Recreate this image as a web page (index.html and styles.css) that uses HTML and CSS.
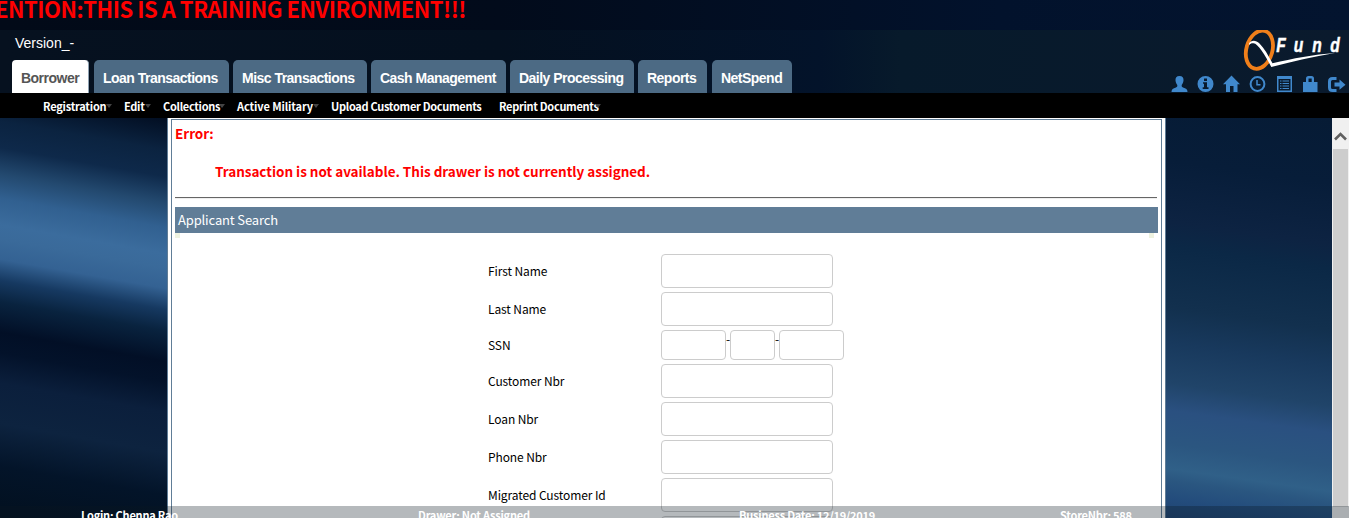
FILE: index.html
```html
<!DOCTYPE html>
<html lang="en">
<head>
<meta charset="utf-8">
<title>QFund</title>
<link rel="stylesheet" href="styles.css">
</head>
<body>
<div class="app">
  <div class="notice"><span class="notice-text">ATTENTION:THIS IS A TRAINING ENVIRONMENT!!!</span></div>
  <header class="header">
    <div class="header-left">
      <div class="version">Version_-</div>
      <nav class="tabs">
        <a class="tab active w-borrower">Borrower</a>
        <a class="tab w-loan">Loan Transactions</a>
        <a class="tab w-misc">Misc Transactions</a>
        <a class="tab w-cash">Cash Management</a>
        <a class="tab w-daily">Daily Processing</a>
        <a class="tab w-reports">Reports</a>
        <a class="tab w-net">NetSpend</a>
      </nav>
    </div>
    <div class="header-right">
      <svg class="logo" width="106" height="42" viewBox="0 0 106 42">
        <ellipse cx="16.400" cy="19.700" rx="13" ry="19.500" fill="none" stroke="#f07f1a" stroke-width="3.800" transform="rotate(16 16.400 19.700)"/>
        <path d="M6 13.500C8 10 12.500 9.500 16.500 13.500C21.500 18.500 25.500 26 29.500 33.300C50 28.500 70 24.500 92 23C70 26.500 50 31.500 28.300 37C22 25 15 13.500 10.500 13.200C8.500 13 7.500 13.500 6 15Z" fill="#fff"/>
        <g class="logo-text" transform="scale(.74 1)"><text x="45" y="21.700">F</text><text x="68.500" y="21.700">u</text><text x="93.500" y="21.700">n</text><text x="118" y="21.700">d</text></g>
      </svg>
      <div class="icons">
        <svg viewBox="0 0 17 17"><path d="M8.500 1C11.500 1 12.800 2.800 12.500 5.500C12.300 8 11.300 9 10.700 10C10.600 11.500 10.900 12 12 12.500C15 13.500 16.500 14.200 16.500 17H.500C.500 14.200 2 13.500 5 12.500C6.100 12 6.400 11.500 6.300 10C5.700 9 4.700 8 4.500 5.500C4.200 2.800 5.500 1 8.500 1Z"/></svg>
        <svg viewBox="0 0 17 17"><path fill-rule="evenodd" d="M8.500 1a8 8 0 1 0 0 16a8 8 0 0 0 0-16ZM7 3.500h3v2.500H7ZM6 7.200h4v5h1.500v1.700H5.700v-1.700H7V8.800H6Z"/></svg>
        <svg viewBox="0 0 17 17"><path d="M8.500.500L17 9.200H14.500V17H10.500V11H7V17H3V9.200H0Z"/></svg>
        <svg viewBox="0 0 17 17"><circle cx="8.500" cy="9" r="6.900" class="line"/><path class="line thin" d="M8 5v4.800h3.500"/></svg>
        <svg viewBox="0 0 17 17"><path fill-rule="evenodd" d="M1 1H16V17H1ZM2.500 4V15.500H14.500V4Z"/><path d="M4 5.500h1.500v1H4zM6.500 5.500H13v1H6.500zM4 8h1.500v1H4zM6.500 8H13v1H6.500zM4 10.500h1.500v1H4zM6.500 10.500H13v1H6.500zM4 13h1.500v1H4zM6.500 13H13v1H6.500z"/></svg>
        <svg viewBox="0 0 17 17"><path fill-rule="evenodd" d="M1 7H4V3.500Q4 1 6.500 1H9.500Q12 1 12 3.500V7H15.500V17H1ZM6.500 7H9.700V3.500H6.500Z"/></svg>
        <svg viewBox="0 0 17 17"><path class="line wide" d="M8.500 3.500H4.500Q1.500 3.500 1.500 6.500V12.500Q1.500 15.500 4.500 15.500H8.500"/><path d="M6.500 7.500H11.500V4.500L17.500 9.700L11.500 14.800V11.500H6.500Z"/></svg>
      </div>
    </div>
  </header>
  <nav class="menu">
    <a class="m-reg drop">Registration</a>
    <a class="m-edit drop">Edit</a>
    <a class="m-coll drop">Collections</a>
    <a class="m-act drop">Active Military</a>
    <a class="m-up">Upload Customer Documents</a>
    <a class="m-rep drop">Reprint Documents</a>
  </nav>
  <div class="body">
    <div class="side-left"></div>
    <main class="panel">
      <div class="panel-inner">
        <div class="error-title">Error:</div>
        <div class="error-text">Transaction is not available. This drawer is not currently assigned.</div>
        <div class="rule"></div>
        <div class="section-title">Applicant Search</div>
        <div class="corners"><i></i><i></i></div>
        <form class="form">
          <label>First Name</label><input type="text">
          <label>Last Name</label><input type="text">
          <label class="short">SSN</label><div class="ssn"><input type="text" class="s3"><span>-</span><input type="text" class="s2"><span>-</span><input type="text" class="s3"></div>
          <label>Customer Nbr</label><input type="text">
          <label>Loan Nbr</label><input type="text">
          <label>Phone Nbr</label><input type="text">
          <label>Migrated Customer Id</label><input type="text">
          <label></label><input type="text">
        </form>
      </div>
    </main>
    <div class="side-right"></div>
    <div class="scrollbar">
      <svg width="17" height="31" viewBox="0 0 17 31"><path d="M3 21.500L8.500 16L14 21.500" fill="none" stroke="#606060" stroke-width="2.600"/></svg>
      <div class="thumb"></div>
    </div>
  </div>
  <footer class="status">
    <span class="f-login">Login: Chenna Rao</span>
    <span class="f-drawer">Drawer: Not Assigned</span>
    <span class="f-date">Business Date: 12/19/2019</span>
    <span class="f-store">StoreNbr: 588</span>
  </footer>
</div>
</body>
</html>
```
FILE: styles.css
```css
* { box-sizing: border-box; }
html, body { margin: 0; height: 100%; overflow: hidden; }
body { font-family: "Noto Sans CJK SC", "Noto Sans", sans-serif; }
.app { width: 1349px; height: 518px; display: flex; flex-direction: column; overflow: hidden; position: relative; background: #020f22; }
.notice { height: 30px; flex: none; background: linear-gradient(90deg, #020a18 0, #020b1b 500px, #02122c 1000px, #03142f 100%); }
.notice-text { display: flex; justify-content: flex-end; width: 466px; color: #f00; font-size: 22px; letter-spacing: -.48px; line-height: 17px; font-weight: 700; white-space: nowrap; }
.header { height: 63px; flex: none; display: flex; justify-content: space-between; background: linear-gradient(90deg, #06111f 0, #04101f 500px, #03132a 820px, #071a2b 900px, #0a1a2d 100%); }
.header-left { font-family: "Liberation Sans", Arial, sans-serif; padding-left: 12px; }
.version { height: 30px; padding: 5px 0 0 3px; color: #fff; font-size: 14px; line-height: 16px; }
.tabs { display: flex; height: 33px; }
.tab { height: 33px; background: #4c6a84; color: #fff; border-radius: 5px 5px 0 0; font-size: 14px; letter-spacing: -.52px; font-weight: 700; line-height: 36px; padding-left: 9px; margin-right: 4px; white-space: nowrap; }
.tab.active { background: #fff; color: #555; border-right: 1px solid #8fa2b3; border-radius: 4px 4px 0 0; }
.w-borrower { width: 77px; margin-right: 5px; }
.w-loan { width: 135px; }
.w-misc { width: 134px; }
.w-cash { width: 135px; }
.w-daily { width: 124px; }
.w-reports { width: 69px; margin-right: 5px; }
.w-net { width: 80px; }
.header-right { width: 178px; display: flex; flex-direction: column; align-items: flex-end; }
.logo { display: block; flex: none; }
.logo-text { font: italic 700 21px "Liberation Sans", Arial, sans-serif; fill: #fff; stroke: #fff; stroke-width: .5; }
.icons { display: flex; width: 174px; justify-content: space-between; padding-top: 3px; margin-right: 4px; }
.icons svg { width: 17px; height: 17px; fill: #4088cc; display: block; overflow: visible; }
.icons .line { fill: none; stroke: #4088cc; stroke-width: 2; }
.icons .thin { stroke-width: 1.500; }
.icons .wide { stroke-width: 3; }
.menu { height: 25px; flex: none; background: #000; display: flex; padding-left: 43px; color: #fff; font-size: 11px; letter-spacing: -.3px; font-weight: 700; line-height: 26px; white-space: nowrap; }
.menu a { position: relative; }
.drop::after { content: ""; position: absolute; top: 11px; right: 12px; border: 3px solid transparent; border-top: 4px solid #444; border-bottom: 0; }
.m-reg { width: 81px; letter-spacing: -.22px; }
.m-edit { width: 39px; }
.m-coll { width: 74px; }
.m-act { width: 94px; letter-spacing: -.1px; }
.m-up { width: 168px; }
.m-rep { width: 114px; }
.body { flex: 1; display: flex; min-height: 0; }
.side-left { width: 167px; background: linear-gradient(190deg, #020e22 0, #0b2340 32px, #0e294a 58px, #23496f 84px, #316090 108px, #3b6c9d 134px, #3a6a9a 148px, #346293 168px, #163961 189px, #09233f 210px, #020f26 240px, #03122a 260px, #0b1f3c 290px, #0d233f 330px, #031429 372px, #02101f 100%); }
.panel { width: 999px; background: #fff; border: solid #607d97; border-width: 0 1px; padding: 1px 3px 0; }
.panel-inner { height: 500px; border: 1px solid #607d97; padding: 0 3px; }
.error-title { color: #f00; font-size: 13.500px; letter-spacing: -.03px; font-weight: 700; height: 30px; line-height: 27px; }
.error-text { color: #f00; font-size: 13.500px; letter-spacing: -.03px; font-weight: 700; height: 47px; line-height: 43px; padding-left: 40px; white-space: nowrap; }
.rule { height: 2px; margin-right: 1px; border-top: 1px solid #666; border-bottom: 1px solid #eee; }
.section-title { height: 26px; margin-top: 8px; background: #607d97; color: #fff; font-size: 13px; letter-spacing: -.15px; line-height: 26px; padding-left: 3px; }
.corners { display: flex; justify-content: space-between; height: 21px; padding-right: 4px; }
.corners i { width: 5px; height: 5px; background: #eef2e0; }
.form { display: grid; grid-template-columns: 173px 190px; padding-left: 313px; row-gap: 4px; font-size: 12px; letter-spacing: -.1px; color: #000; }
.form label { line-height: 34px; height: 34px; }
.form .short { line-height: 30px; height: 30px; }
.form input { display: block; width: 172px; height: 34px; border: 1px solid #ccc; border-radius: 4px; background: #fff; padding: 0; margin: 0; }
.form .ssn { display: flex; height: 30px; align-items: flex-start; }
.form .ssn input { height: 30px; }
.form .ssn .s3 { width: 65px; }
.form .ssn .s2 { width: 45px; }
.ssn span { width: 4px; line-height: 18px; }
.side-right { width: 166px; background: linear-gradient(188deg, #061b35 0, #071d39 65px, #0d2342 125px, #0b2846 150px, #12304e 210px, #18395d 245px, #204469 285px, #2a5080 312px, #2b5680 345px, #306088 370px, #2a5680 382px, #234c7c 400px, #204470 100%); }
.scrollbar { width: 17px; background: #f0f0f0; }
.scrollbar svg { display: block; }
.thumb { height: 358px; width: 15px; margin-left: 1px; background: #cdcdcd; }
.status { position: absolute; left: 0; right: 0; bottom: 0; height: 12px; overflow: hidden; display: flex; padding-left: 81px; background: rgba(10, 22, 32, .3); color: #fff; font-size: 11px; letter-spacing: -.22px; font-weight: 700; line-height: 18px; white-space: nowrap; }
.f-login { width: 337px; }
.f-drawer, .f-date { width: 321px; }
```
